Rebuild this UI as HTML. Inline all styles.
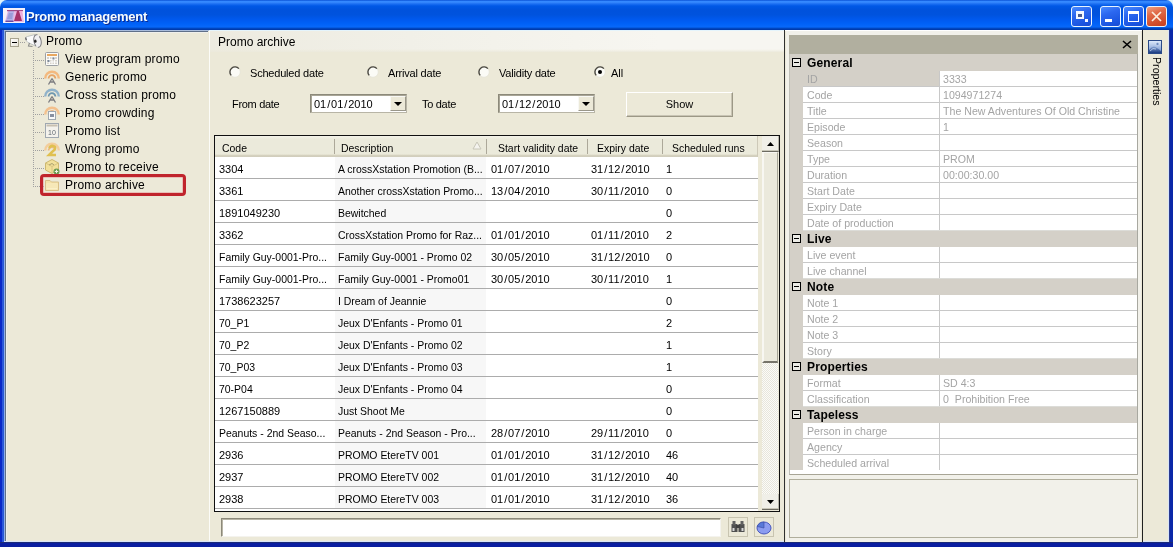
<!DOCTYPE html>
<html><head><meta charset="utf-8">
<style>
*{box-sizing:border-box;margin:0;padding:0}
html,body{width:1173px;height:547px;overflow:hidden;background:#0a3ed8}
body{position:relative;font-family:"Liberation Sans", sans-serif;font-size:11px;color:#000}
#root{position:absolute;left:0;top:0;width:1173px;height:547px;overflow:hidden;will-change:transform;background:#dff4fc}
.ab{position:absolute}
.t{position:absolute;white-space:nowrap;line-height:14px}
.dg{letter-spacing:0px}
.sl{margin:0 0.9px}
.n{transform:scaleX(.95);transform-origin:0 0}
.pn{transform:scaleX(.965);transform-origin:0 0}
</style></head><body><div id="root">

<div class="ab" style="left:0;top:20px;width:1173px;height:527px;background:#0a3ed8"></div>
<div class="ab" style="left:0;top:0;width:1173px;height:30px;border-radius:7px 7px 0 0;background:linear-gradient(to bottom,#0042c8 0px,#2f86ff 1px,#3a8cff 2px,#1a6ef2 4px,#0058e6 6px,#0052dc 10px,#0053de 15px,#005af0 20px,#0062f8 24px,#0868fa 27px,#0050d0 28px,#003cb0 29px,#0038a8 30px)"></div>
<div class="ab" style="left:0;top:30px;width:5px;height:517px;background:linear-gradient(to right,#0a28c8 0 2px,#2a58d8 2px 4px,#90b0e8 4px 5px)"></div>
<div class="ab" style="left:1169px;top:30px;width:4px;height:517px;background:linear-gradient(to right,#2a3a90 0 1px,#0a28a8 1px 4px)"></div>
<div class="ab" style="left:0;top:542px;width:1173px;height:5px;background:linear-gradient(to bottom,#1a2a78 0 1px,#0a1ea0 1px 5px)"></div>
<div class="ab" style="left:5px;top:30px;width:1164px;height:512px;background:#ece9d8"></div>
<div class="ab" style="left:4px;top:30px;width:205px;height:1px;background:#a8bcdc"></div>
<svg class="ab" style="left:3px;top:8px" width="22" height="15" viewBox="0 0 22 15"><rect x="0" y="0" width="22" height="15" fill="#f4f0fa"/><polygon points="2,14 5,2 19,2 21,14" fill="#e8b8e4"/><polygon points="3,13 5.5,3 11,3 10,13" fill="#b4b0e8"/><polygon points="4,11 6,5 10,5 9,11" fill="#9c9ad8"/><rect x="4" y="2" width="16" height="1.2" fill="#a04a88"/><rect x="2.5" y="12.6" width="8" height="1.4" fill="#6a4aa0"/><polygon points="11,13 14,3 16,3 19,13" fill="#a83068"/><polygon points="16,3 19,3 20,9" fill="#f0a8d8"/></svg>
<div class="t" style="left:26px;top:8px;font-size:13px;letter-spacing:-0.25px;font-weight:bold;color:#f4fcff;line-height:17px;text-shadow:1px 1px 0 #0a2a90">Promo management</div>
<div class="ab" style="left:1071px;top:6px;width:21px;height:21px;border:1px solid #e8f4ff;border-radius:3px;background:linear-gradient(160deg,#4a8cff 0%,#2c68f0 35%,#1a54e0 80%,#1a4cd0 100%)"></div>
<div class="ab" style="left:1100px;top:6px;width:21px;height:21px;border:1px solid #e8f4ff;border-radius:3px;background:linear-gradient(160deg,#4a8cff 0%,#2c68f0 35%,#1a54e0 80%,#1a4cd0 100%)"></div>
<div class="ab" style="left:1123px;top:6px;width:21px;height:21px;border:1px solid #e8f4ff;border-radius:3px;background:linear-gradient(160deg,#4a8cff 0%,#2c68f0 35%,#1a54e0 80%,#1a4cd0 100%)"></div>
<div class="ab" style="left:1146px;top:6px;width:21px;height:21px;border:1px solid #e8f4ff;border-radius:3px;background:linear-gradient(160deg,#f0a080 0%,#e06a48 35%,#d04a28 80%,#c84020 100%)"></div>
<div class="ab" style="left:1076px;top:11px;width:8px;height:8px;border:2px solid #f4f8ff;border-top-width:3px;background:#4a5c90"></div>
<div class="ab" style="left:1085px;top:19px;width:3px;height:3px;background:#f4f8ff"></div>
<div class="ab" style="left:1105px;top:19px;width:7px;height:3px;background:#fff"></div>
<div class="ab" style="left:1128px;top:11px;width:11px;height:11px;border:1px solid #fff;border-top:3px solid #fff"></div>
<svg class="ab" style="left:1146px;top:6px" width="21" height="21"><path d="M6 6 L15 15 M15 6 L6 15" stroke="#fbeee0" stroke-width="1.7"/></svg>
<div class="ab" style="left:5px;top:31px;width:203px;height:1px;background:#607088"></div>
<div class="ab" style="left:5px;top:31px;width:1px;height:510px;background:#607088"></div>
<div class="ab" style="left:6px;top:32px;width:202px;height:1px;background:#f0f0ec"></div>
<div class="ab" style="left:6px;top:32px;width:1px;height:509px;background:#eef0f0"></div>
<div class="ab" style="left:4px;top:541px;width:1165px;height:1px;background:#d8e4fa"></div>
<div class="ab" style="left:1168px;top:30px;width:1px;height:512px;background:#d8e4f8"></div>
<div class="ab" style="left:10px;top:38px;width:9px;height:9px;border:1px solid #a8a490;background:linear-gradient(135deg,#fff,#e8e4d8)"></div>
<div class="ab" style="left:12px;top:42px;width:5px;height:1px;background:#000"></div>
<div class="ab" style="left:20px;top:42px;width:5px;height:1px;background:repeating-linear-gradient(to right,#a0a0a0 0 1px,transparent 1px 2px)"></div>
<div class="ab" style="left:33px;top:50px;width:1px;height:137px;background:repeating-linear-gradient(to bottom,#a0a0a0 0 1px,transparent 1px 2px)"></div>
<div class="ab" style="left:35px;top:60px;width:9px;height:1px;background:repeating-linear-gradient(to right,#a0a0a0 0 1px,transparent 1px 2px)"></div>
<div class="ab" style="left:35px;top:78px;width:9px;height:1px;background:repeating-linear-gradient(to right,#a0a0a0 0 1px,transparent 1px 2px)"></div>
<div class="ab" style="left:35px;top:96px;width:9px;height:1px;background:repeating-linear-gradient(to right,#a0a0a0 0 1px,transparent 1px 2px)"></div>
<div class="ab" style="left:35px;top:114px;width:9px;height:1px;background:repeating-linear-gradient(to right,#a0a0a0 0 1px,transparent 1px 2px)"></div>
<div class="ab" style="left:35px;top:132px;width:9px;height:1px;background:repeating-linear-gradient(to right,#a0a0a0 0 1px,transparent 1px 2px)"></div>
<div class="ab" style="left:35px;top:150px;width:9px;height:1px;background:repeating-linear-gradient(to right,#a0a0a0 0 1px,transparent 1px 2px)"></div>
<div class="ab" style="left:35px;top:168px;width:9px;height:1px;background:repeating-linear-gradient(to right,#a0a0a0 0 1px,transparent 1px 2px)"></div>
<div class="ab" style="left:35px;top:186px;width:9px;height:1px;background:repeating-linear-gradient(to right,#a0a0a0 0 1px,transparent 1px 2px)"></div>
<div class="t" style="left:46px;top:33px;font-size:12px;line-height:16px;letter-spacing:0.2px">Promo</div>
<svg class="ab" style="left:23px;top:32px" width="19" height="17" viewBox="0 0 19 17"><path d="M2.5 6 Q3 4.5 4.5 4.5 L12 2.5 L13.5 14.5 L5 10.5 Q3 9.5 2.5 6 Z" fill="#fbfbfb" stroke="#b8bcbc" stroke-width="0.9"/><path d="M3 5.5 Q2.5 7 3.5 8" fill="none" stroke="#505050" stroke-width="1.2"/><path d="M6.5 11 L5.5 14 L9.5 14.5" fill="none" stroke="#8a8a8a" stroke-width="1.1"/><ellipse cx="14.5" cy="9" rx="3.6" ry="6.4" transform="rotate(-12 14.5 9)" fill="#f0f0f2" stroke="#7c7c80" stroke-width="1" stroke-dasharray="9 2 14 2"/><ellipse cx="12.3" cy="9.2" rx="1.3" ry="1.6" fill="#282828"/></svg>
<svg class="ab" style="left:44px;top:50px" width="16" height="17" viewBox="0 0 16 17"><rect x="1.5" y="2.5" width="13" height="13" rx="1" fill="#fbfbf8" stroke="#9ca0a4"/><rect x="3" y="4" width="10" height="2" fill="#e8a860"/><rect x="3" y="7" width="10" height="7" fill="#d8d4cc"/><path d="M3 9.5 H13 M3 12 H13 M5.5 7 V14 M8 7 V14 M10.5 7 V14" stroke="#fff" stroke-width="0.9"/><rect x="8.5" y="7.5" width="2" height="2" fill="#7c8898"/><rect x="3.5" y="10" width="2" height="2" fill="#7c8898"/></svg>
<div class="t" style="left:65px;top:51px;font-size:12px;line-height:16px;letter-spacing:0.2px">View program promo</div>
<svg class="ab" style="left:44px;top:68px" width="16" height="17" viewBox="0 0 16 17"><path d="M1.2 10.5 A6.8 6.8 0 0 1 14.8 10.5" fill="none" stroke="#f4b070" stroke-width="2.4" opacity=".85"/><path d="M4.6 10.5 A3.4 3.4 0 0 1 11.4 10.5" fill="none" stroke="#e89850" stroke-width="1.8" opacity=".85"/><path d="M8 10.5 L4.5 16.5 M8 10.5 L11.5 16.5 M6 14 H10" stroke="#7c7c80" stroke-width="1.3" fill="none"/></svg>
<div class="t" style="left:65px;top:69px;font-size:12px;line-height:16px;letter-spacing:0.2px">Generic promo</div>
<svg class="ab" style="left:44px;top:86px" width="16" height="17" viewBox="0 0 16 17"><path d="M1.2 10.5 A6.8 6.8 0 0 1 14.8 10.5" fill="none" stroke="#80a8c8" stroke-width="2.4" opacity=".85"/><path d="M4.6 10.5 A3.4 3.4 0 0 1 11.4 10.5" fill="none" stroke="#5888a8" stroke-width="1.8" opacity=".85"/><path d="M8 10.5 L4.5 16.5 M8 10.5 L11.5 16.5 M6 14 H10" stroke="#7c7c80" stroke-width="1.3" fill="none"/></svg>
<div class="t" style="left:65px;top:87px;font-size:12px;line-height:16px;letter-spacing:0.2px">Cross station promo</div>
<svg class="ab" style="left:44px;top:104px" width="16" height="17" viewBox="0 0 16 17"><path d="M1.2 10.5 A6.8 6.8 0 0 1 14.8 10.5" fill="none" stroke="#f4b880" stroke-width="2.4" opacity=".85"/><path d="M4.6 10.5 A3.4 3.4 0 0 1 11.4 10.5" fill="none" stroke="#e8a060" stroke-width="1.8" opacity=".85"/><rect x="4.5" y="7.5" width="7" height="8" fill="#fafafa" stroke="#a0a8b0"/><rect x="6" y="10" width="4" height="3" fill="#8890a0"/></svg>
<div class="t" style="left:65px;top:105px;font-size:12px;line-height:16px;letter-spacing:0.2px">Promo crowding</div>
<svg class="ab" style="left:44px;top:122px" width="16" height="17" viewBox="0 0 16 17"><rect x="1.5" y="1.5" width="13" height="14" fill="#f4f2ec" stroke="#a0a8b0"/><rect x="2.5" y="2.5" width="11" height="2" fill="#c8c0b0"/><text x="8" y="13" font-size="7" text-anchor="middle" fill="#606870" font-family="Liberation Sans">10</text></svg>
<div class="t" style="left:65px;top:123px;font-size:12px;line-height:16px;letter-spacing:0.2px">Promo list</div>
<svg class="ab" style="left:44px;top:140px" width="16" height="17" viewBox="0 0 16 17"><path d="M1.2 10.5 A6.8 6.8 0 0 1 14.8 10.5" fill="none" stroke="#f4c890" stroke-width="2.4" opacity=".85"/><path d="M4.6 10.5 A3.4 3.4 0 0 1 11.4 10.5" fill="none" stroke="#eab070" stroke-width="1.8" opacity=".85"/><path d="M5 8 Q8 4 11 7 Q12 9 8 12 L5 15 H12" fill="none" stroke="#e0c050" stroke-width="2.5"/></svg>
<div class="t" style="left:65px;top:141px;font-size:12px;line-height:16px;letter-spacing:0.2px">Wrong promo</div>
<svg class="ab" style="left:44px;top:158px" width="16" height="17" viewBox="0 0 16 17"><path d="M8 1.5 L14.5 5 V12 L8 15.5 L1.5 12 V5 Z" fill="#f2e09a" stroke="#cdb870"/><path d="M1.5 5 L8 8.5 L14.5 5 M8 8.5 V15.5" stroke="#d8c480" fill="none"/><path d="M5 7 L8 5.5 L10 7" stroke="#a8a070" fill="none"/><circle cx="12.5" cy="13.5" r="3" fill="#6a9a50"/><path d="M10.8 13.5 H14.2 M12.5 11.8 V15.2" stroke="#f0f0e0" stroke-width="1"/></svg>
<div class="t" style="left:65px;top:159px;font-size:12px;line-height:16px;letter-spacing:0.2px">Promo to receive</div>
<svg class="ab" style="left:44px;top:176px" width="16" height="17" viewBox="0 0 16 17"><path d="M1.5 4.5 H6 L7.5 6 H14.5 V14.5 H1.5 Z" fill="#f4e2a8" stroke="#d8c088"/><rect x="2.5" y="7.5" width="11" height="6" fill="#faf0c8"/><path d="M3 9 H13 M3 11 H13" stroke="#f0dca0" stroke-width="0.8"/></svg>
<div class="t" style="left:65px;top:177px;font-size:12px;line-height:16px;letter-spacing:0.2px">Promo archive</div>
<div class="ab" style="left:40px;top:174px;width:146px;height:22px;border:3px solid #c0242c;border-radius:4px;box-shadow:inset 0 0 0 1px rgba(230,150,150,.5)"></div>
<div class="ab" style="left:209px;top:30px;width:1px;height:511px;background:#fcfcf8"></div>
<div class="ab" style="left:209px;top:30px;width:575px;height:1px;background:#e4f4fc"></div>
<div class="ab" style="left:784px;top:30px;width:1px;height:512px;background:#303030"></div>
<div class="ab" style="left:210px;top:31px;width:574px;height:21px;background:linear-gradient(to bottom,rgba(236,233,216,0) 0,rgba(236,233,216,0) 18px,rgba(236,233,216,.5) 20px,#ebe9dc 21px),linear-gradient(to right,#edebe0 0,#f1f0e8 200px,#f7f6f1 450px,#f7f6f1 574px)"></div>
<div class="t" style="left:218px;top:35px;font-size:12px">Promo archive</div>
<svg class="ab" style="left:229px;top:66px" width="12" height="12" viewBox="0 0 12 12"><circle cx="6" cy="6" r="5.3" fill="#fbfbf6" stroke="#e4e2d6" stroke-width="0.8"/><path d="M2.2 9.4 A4.9 4.9 0 0 1 9.9 2.6" fill="none" stroke="#4a4840" stroke-width="1.4"/></svg>
<div class="t" style="left:250px;top:66px;letter-spacing:-0.2px">Scheduled date</div>
<svg class="ab" style="left:367px;top:66px" width="12" height="12" viewBox="0 0 12 12"><circle cx="6" cy="6" r="5.3" fill="#fbfbf6" stroke="#e4e2d6" stroke-width="0.8"/><path d="M2.2 9.4 A4.9 4.9 0 0 1 9.9 2.6" fill="none" stroke="#4a4840" stroke-width="1.4"/></svg>
<div class="t" style="left:388px;top:66px;letter-spacing:-0.2px">Arrival date</div>
<svg class="ab" style="left:478px;top:66px" width="12" height="12" viewBox="0 0 12 12"><circle cx="6" cy="6" r="5.3" fill="#fbfbf6" stroke="#e4e2d6" stroke-width="0.8"/><path d="M2.2 9.4 A4.9 4.9 0 0 1 9.9 2.6" fill="none" stroke="#4a4840" stroke-width="1.4"/></svg>
<div class="t" style="left:499px;top:66px;letter-spacing:-0.2px">Validity date</div>
<svg class="ab" style="left:594px;top:66px" width="12" height="12" viewBox="0 0 12 12"><circle cx="6" cy="6" r="5.3" fill="#fbfbf6" stroke="#e4e2d6" stroke-width="0.8"/><path d="M2.2 9.4 A4.9 4.9 0 0 1 9.9 2.6" fill="none" stroke="#4a4840" stroke-width="1.4"/><circle cx="6" cy="6" r="2" fill="#000"/></svg>
<div class="t" style="left:611px;top:66px">All</div>
<div class="t" style="left:232px;top:97px;letter-spacing:-0.3px">From date</div>
<div class="t" style="left:422px;top:97px;letter-spacing:-0.3px">To date</div>
<div class="ab" style="left:310px;top:94px;width:97px;height:19px;background:#fff;border:1px solid;border-color:#8c897a #b8b5a6 #b8b5a6 #8c897a;box-shadow:inset 1px 1px 0 #a8a596"></div><div class="t dg" style="left:314px;top:97px">01<span class=sl>/</span>01<span class=sl>/</span>2010</div><div class="ab" style="left:390px;top:96px;width:16px;height:15px;background:#ece9d8;border:1px solid;border-color:#f8f8f4 #9a978a #9a978a #f8f8f4"></div><div class="ab" style="left:394px;top:102px;width:0;height:0;border-left:4px solid transparent;border-right:4px solid transparent;border-top:4px solid #000"></div>
<div class="ab" style="left:498px;top:94px;width:97px;height:19px;background:#fff;border:1px solid;border-color:#8c897a #b8b5a6 #b8b5a6 #8c897a;box-shadow:inset 1px 1px 0 #a8a596"></div><div class="t dg" style="left:502px;top:97px">01<span class=sl>/</span>12<span class=sl>/</span>2010</div><div class="ab" style="left:578px;top:96px;width:16px;height:15px;background:#ece9d8;border:1px solid;border-color:#f8f8f4 #9a978a #9a978a #f8f8f4"></div><div class="ab" style="left:582px;top:102px;width:0;height:0;border-left:4px solid transparent;border-right:4px solid transparent;border-top:4px solid #000"></div>
<div class="ab" style="left:626px;top:92px;width:107px;height:25px;background:#ece9d8;border:1px solid;border-color:#fff #9c9886 #9c9886 #fff;box-shadow:inset -1px -1px 0 #c8c4b4"></div>
<div class="t" style="left:626px;top:97px;width:107px;text-align:center">Show</div>
<div class="ab" style="left:214px;top:135px;width:566px;height:377px;background:#fff;border:1px solid #101010"></div>
<div class="ab" style="left:335px;top:157px;width:151px;height:352px;background:#f7f7f7"></div>
<div class="ab" style="left:215px;top:136px;width:543px;height:21px;background:linear-gradient(to bottom,#f4f3ea,#ebeadb 3px,#ebeadb 18px,#dedbc8 19px,#cbc7b5 20px,#d8d5c4 21px)"></div>
<div class="ab" style="left:757px;top:136px;width:1px;height:21px;background:#cdc9b8"></div>
<div class="t n" style="left:222px;top:141px">Code</div>
<div class="ab" style="left:334px;top:139px;width:1px;height:15px;background:#aca899"></div>
<div class="t n" style="left:341px;top:141px">Description</div>
<div class="ab" style="left:486px;top:139px;width:1px;height:15px;background:#aca899"></div>
<div class="t n" style="left:498px;top:141px">Start validity date</div>
<div class="ab" style="left:587px;top:139px;width:1px;height:15px;background:#aca899"></div>
<div class="t n" style="left:597px;top:141px">Expiry date</div>
<div class="ab" style="left:662px;top:139px;width:1px;height:15px;background:#aca899"></div>
<div class="t n" style="left:672px;top:141px">Scheduled runs</div>
<svg class="ab" style="left:472px;top:141px" width="10" height="9"><path d="M1 8 L5 1 L9 8 Z" fill="#f4f3ee" stroke="#c8c6b8" stroke-width="1"/></svg>
<div class="ab" style="left:215px;top:178px;width:543px;height:1px;background:#acacac"></div>
<div class="t" style="left:219px;top:162px">3304</div>
<div class="t n" style="left:338px;top:162px">A crossXstation Promotion (B...</div>
<div class="t" style="left:491px;top:162px">01<span class="sl">/</span>07<span class="sl">/</span>2010</div>
<div class="t" style="left:591px;top:162px">31<span class="sl">/</span>12<span class="sl">/</span>2010</div>
<div class="t" style="left:666px;top:162px">1</div>
<div class="ab" style="left:215px;top:200px;width:543px;height:1px;background:#acacac"></div>
<div class="t" style="left:219px;top:184px">3361</div>
<div class="t n" style="left:338px;top:184px">Another crossXstation Promo...</div>
<div class="t" style="left:491px;top:184px">13<span class="sl">/</span>04<span class="sl">/</span>2010</div>
<div class="t" style="left:591px;top:184px">30<span class="sl">/</span>11<span class="sl">/</span>2010</div>
<div class="t" style="left:666px;top:184px">0</div>
<div class="ab" style="left:215px;top:222px;width:543px;height:1px;background:#acacac"></div>
<div class="t" style="left:219px;top:206px">1891049230</div>
<div class="t n" style="left:338px;top:206px">Bewitched</div>
<div class="t" style="left:666px;top:206px">0</div>
<div class="ab" style="left:215px;top:244px;width:543px;height:1px;background:#acacac"></div>
<div class="t" style="left:219px;top:228px">3362</div>
<div class="t n" style="left:338px;top:228px">CrossXstation Promo for Raz...</div>
<div class="t" style="left:491px;top:228px">01<span class="sl">/</span>01<span class="sl">/</span>2010</div>
<div class="t" style="left:591px;top:228px">01<span class="sl">/</span>11<span class="sl">/</span>2010</div>
<div class="t" style="left:666px;top:228px">2</div>
<div class="ab" style="left:215px;top:266px;width:543px;height:1px;background:#acacac"></div>
<div class="t n" style="left:219px;top:250px">Family Guy-0001-Pro...</div>
<div class="t n" style="left:338px;top:250px">Family Guy-0001 - Promo 02</div>
<div class="t" style="left:491px;top:250px">30<span class="sl">/</span>05<span class="sl">/</span>2010</div>
<div class="t" style="left:591px;top:250px">31<span class="sl">/</span>12<span class="sl">/</span>2010</div>
<div class="t" style="left:666px;top:250px">0</div>
<div class="ab" style="left:215px;top:288px;width:543px;height:1px;background:#acacac"></div>
<div class="t n" style="left:219px;top:272px">Family Guy-0001-Pro...</div>
<div class="t n" style="left:338px;top:272px">Family Guy-0001 - Promo01</div>
<div class="t" style="left:491px;top:272px">30<span class="sl">/</span>05<span class="sl">/</span>2010</div>
<div class="t" style="left:591px;top:272px">30<span class="sl">/</span>11<span class="sl">/</span>2010</div>
<div class="t" style="left:666px;top:272px">1</div>
<div class="ab" style="left:215px;top:310px;width:543px;height:1px;background:#acacac"></div>
<div class="t" style="left:219px;top:294px">1738623257</div>
<div class="t n" style="left:338px;top:294px">I Dream of Jeannie</div>
<div class="t" style="left:666px;top:294px">0</div>
<div class="ab" style="left:215px;top:332px;width:543px;height:1px;background:#acacac"></div>
<div class="t n" style="left:219px;top:316px">70_P1</div>
<div class="t n" style="left:338px;top:316px">Jeux D'Enfants - Promo 01</div>
<div class="t" style="left:666px;top:316px">2</div>
<div class="ab" style="left:215px;top:354px;width:543px;height:1px;background:#acacac"></div>
<div class="t n" style="left:219px;top:338px">70_P2</div>
<div class="t n" style="left:338px;top:338px">Jeux D'Enfants - Promo 02</div>
<div class="t" style="left:666px;top:338px">1</div>
<div class="ab" style="left:215px;top:376px;width:543px;height:1px;background:#acacac"></div>
<div class="t n" style="left:219px;top:360px">70_P03</div>
<div class="t n" style="left:338px;top:360px">Jeux D'Enfants - Promo 03</div>
<div class="t" style="left:666px;top:360px">1</div>
<div class="ab" style="left:215px;top:398px;width:543px;height:1px;background:#acacac"></div>
<div class="t n" style="left:219px;top:382px">70-P04</div>
<div class="t n" style="left:338px;top:382px">Jeux D'Enfants - Promo 04</div>
<div class="t" style="left:666px;top:382px">0</div>
<div class="ab" style="left:215px;top:420px;width:543px;height:1px;background:#acacac"></div>
<div class="t" style="left:219px;top:404px">1267150889</div>
<div class="t n" style="left:338px;top:404px">Just Shoot Me</div>
<div class="t" style="left:666px;top:404px">0</div>
<div class="ab" style="left:215px;top:442px;width:543px;height:1px;background:#acacac"></div>
<div class="t n" style="left:219px;top:426px">Peanuts - 2nd Seaso...</div>
<div class="t n" style="left:338px;top:426px">Peanuts - 2nd Season - Pro...</div>
<div class="t" style="left:491px;top:426px">28<span class="sl">/</span>07<span class="sl">/</span>2010</div>
<div class="t" style="left:591px;top:426px">29<span class="sl">/</span>11<span class="sl">/</span>2010</div>
<div class="t" style="left:666px;top:426px">0</div>
<div class="ab" style="left:215px;top:464px;width:543px;height:1px;background:#acacac"></div>
<div class="t" style="left:219px;top:448px">2936</div>
<div class="t n" style="left:338px;top:448px">PROMO EtereTV 001</div>
<div class="t" style="left:491px;top:448px">01<span class="sl">/</span>01<span class="sl">/</span>2010</div>
<div class="t" style="left:591px;top:448px">31<span class="sl">/</span>12<span class="sl">/</span>2010</div>
<div class="t" style="left:666px;top:448px">46</div>
<div class="ab" style="left:215px;top:486px;width:543px;height:1px;background:#acacac"></div>
<div class="t" style="left:219px;top:470px">2937</div>
<div class="t n" style="left:338px;top:470px">PROMO EtereTV 002</div>
<div class="t" style="left:491px;top:470px">01<span class="sl">/</span>01<span class="sl">/</span>2010</div>
<div class="t" style="left:591px;top:470px">31<span class="sl">/</span>12<span class="sl">/</span>2010</div>
<div class="t" style="left:666px;top:470px">40</div>
<div class="ab" style="left:215px;top:508px;width:543px;height:1px;background:#acacac"></div>
<div class="t" style="left:219px;top:492px">2938</div>
<div class="t n" style="left:338px;top:492px">PROMO EtereTV 003</div>
<div class="t" style="left:491px;top:492px">01<span class="sl">/</span>01<span class="sl">/</span>2010</div>
<div class="t" style="left:591px;top:492px">31<span class="sl">/</span>12<span class="sl">/</span>2010</div>
<div class="t" style="left:666px;top:492px">36</div>
<div class="ab" style="left:758px;top:136px;width:21px;height:375px;background:#ece9d8"></div>
<div class="ab" style="left:762px;top:152px;width:16px;height:211px;background:#ebe9dc;border-left:2px solid #f8f7f2;border-top:1px solid #f8f7f2;border-bottom:2px solid #76746a;border-right:1px solid #a8a698"></div>
<div class="ab" style="left:762px;top:363px;width:16px;height:131px;background:repeating-conic-gradient(#e8e6dc 0 25%,#fbfbf8 0 50%) 0 0/2px 2px"></div>
<div class="ab" style="left:762px;top:136px;width:17px;height:16px;background:#f0efe8;border-bottom:1px solid #6c6a60;border-right:1px solid #b8b6aa;box-shadow:inset 0 -1px 0 #c8c6b8"></div><svg class="ab" style="left:767px;top:142px" width="7" height="4"><path d="M0 4 L3.5 0 L7 4 Z" fill="#000"/></svg>
<div class="ab" style="left:762px;top:494px;width:17px;height:16px;background:#f0efe8;border-bottom:1px solid #6c6a60;border-right:1px solid #b8b6aa;box-shadow:inset 0 -1px 0 #c8c6b8"></div><svg class="ab" style="left:767px;top:500px" width="7" height="4"><path d="M0 0 L7 0 L3.5 4 Z" fill="#000"/></svg>
<div class="ab" style="left:221px;top:518px;width:500px;height:19px;background:#fff;border:1px solid;border-color:#8c897a #f4f3ee #f4f3ee #8c897a;box-shadow:inset 1px 1px 0 #b8b5a6"></div>
<div class="ab" style="left:728px;top:517px;width:20px;height:20px;border:1px solid #c8c4b0;background:#ece9d8"></div>
<svg class="ab" style="left:731px;top:520px" width="14" height="13"><rect x="0.5" y="4" width="6" height="8" fill="#505050"/><rect x="7.5" y="4" width="6" height="8" fill="#505050"/><rect x="1.5" y="1" width="3" height="4" fill="#606060"/><rect x="9.5" y="1" width="3" height="4" fill="#606060"/><rect x="5" y="5" width="4" height="3" fill="#404040"/><rect x="1.5" y="8" width="2" height="3" fill="#d8d8d8"/><rect x="10.5" y="8" width="2" height="3" fill="#d8d8d8"/></svg>
<div class="ab" style="left:754px;top:517px;width:20px;height:20px;border:1px solid #c8c4b0;background:#ece9d8"></div>
<svg class="ab" style="left:756px;top:520px" width="16" height="15"><ellipse cx="8" cy="8" rx="7" ry="6" fill="#8c9cf0" stroke="#4858c0"/><path d="M8 8 L8 2 A7 6 0 0 0 1.2 6.5 Z" fill="#5878d8" stroke="#3848a0" stroke-width="0.6"/></svg>
<div class="ab" style="left:785px;top:30px;width:357px;height:512px;background:#ece9d8"></div>
<div class="ab" style="left:785px;top:30px;width:357px;height:1px;background:#fff"></div>
<div class="ab" style="left:1142px;top:30px;width:1px;height:512px;background:#202020"></div>
<div class="ab" style="left:786px;top:31px;width:355px;height:511px;background:#f2f1ea"></div>
<div class="ab" style="left:789px;top:35px;width:349px;height:19px;background:#b1af9f"></div>
<svg class="ab" style="left:1122px;top:40px" width="10" height="9"><path d="M1 1 L9 8 M9 1 L1 8" stroke="#000" stroke-width="1.6"/></svg>
<div class="ab" style="left:789px;top:54px;width:349px;height:421px;background:#fff;border-bottom:1px solid #a8a596;border-left:1px solid #c0c0b8;border-right:1px solid #a8a8a0"></div>
<div class="ab" style="left:790px;top:54px;width:13px;height:416px;background:#d4d0c8"></div>
<div class="ab" style="left:803px;top:70px;width:136px;height:16px;background:#d4d0c8"></div>
<div class="ab" style="left:803px;top:70px;width:334px;height:1px;background:#c8c8c8"></div>
<div class="ab" style="left:939px;top:70px;width:1px;height:16px;background:#c8c8c8"></div>
<div class="t pn" style="left:807px;top:72px;color:#a4a4a4">ID</div>
<div class="t pn" style="left:943px;top:72px;color:#a4a4a4">3333</div>
<div class="ab" style="left:803px;top:86px;width:334px;height:1px;background:#c8c8c8"></div>
<div class="ab" style="left:939px;top:86px;width:1px;height:16px;background:#c8c8c8"></div>
<div class="t pn" style="left:807px;top:88px;color:#a4a4a4">Code</div>
<div class="t pn" style="left:943px;top:88px;color:#a4a4a4">1094971274</div>
<div class="ab" style="left:803px;top:102px;width:334px;height:1px;background:#c8c8c8"></div>
<div class="ab" style="left:939px;top:102px;width:1px;height:16px;background:#c8c8c8"></div>
<div class="t pn" style="left:807px;top:104px;color:#a4a4a4">Title</div>
<div class="t pn" style="left:943px;top:104px;color:#a4a4a4">The New Adventures Of Old Christine</div>
<div class="ab" style="left:803px;top:118px;width:334px;height:1px;background:#c8c8c8"></div>
<div class="ab" style="left:939px;top:118px;width:1px;height:16px;background:#c8c8c8"></div>
<div class="t pn" style="left:807px;top:120px;color:#a4a4a4">Episode</div>
<div class="t pn" style="left:943px;top:120px;color:#a4a4a4">1</div>
<div class="ab" style="left:803px;top:134px;width:334px;height:1px;background:#c8c8c8"></div>
<div class="ab" style="left:939px;top:134px;width:1px;height:16px;background:#c8c8c8"></div>
<div class="t pn" style="left:807px;top:136px;color:#a4a4a4">Season</div>
<div class="ab" style="left:803px;top:150px;width:334px;height:1px;background:#c8c8c8"></div>
<div class="ab" style="left:939px;top:150px;width:1px;height:16px;background:#c8c8c8"></div>
<div class="t pn" style="left:807px;top:152px;color:#a4a4a4">Type</div>
<div class="t pn" style="left:943px;top:152px;color:#a4a4a4">PROM</div>
<div class="ab" style="left:803px;top:166px;width:334px;height:1px;background:#c8c8c8"></div>
<div class="ab" style="left:939px;top:166px;width:1px;height:16px;background:#c8c8c8"></div>
<div class="t pn" style="left:807px;top:168px;color:#a4a4a4">Duration</div>
<div class="t pn" style="left:943px;top:168px;color:#a4a4a4">00:00:30.00</div>
<div class="ab" style="left:803px;top:182px;width:334px;height:1px;background:#c8c8c8"></div>
<div class="ab" style="left:939px;top:182px;width:1px;height:16px;background:#c8c8c8"></div>
<div class="t pn" style="left:807px;top:184px;color:#a4a4a4">Start Date</div>
<div class="ab" style="left:803px;top:198px;width:334px;height:1px;background:#c8c8c8"></div>
<div class="ab" style="left:939px;top:198px;width:1px;height:16px;background:#c8c8c8"></div>
<div class="t pn" style="left:807px;top:200px;color:#a4a4a4">Expiry Date</div>
<div class="ab" style="left:803px;top:214px;width:334px;height:1px;background:#c8c8c8"></div>
<div class="ab" style="left:939px;top:214px;width:1px;height:16px;background:#c8c8c8"></div>
<div class="t pn" style="left:807px;top:216px;color:#a4a4a4">Date of production</div>
<div class="ab" style="left:803px;top:230px;width:334px;height:1px;background:#dcdcd8"></div>
<div class="ab" style="left:803px;top:246px;width:334px;height:1px;background:#c8c8c8"></div>
<div class="ab" style="left:939px;top:246px;width:1px;height:16px;background:#c8c8c8"></div>
<div class="t pn" style="left:807px;top:248px;color:#a4a4a4">Live event</div>
<div class="ab" style="left:803px;top:262px;width:334px;height:1px;background:#c8c8c8"></div>
<div class="ab" style="left:939px;top:262px;width:1px;height:16px;background:#c8c8c8"></div>
<div class="t pn" style="left:807px;top:264px;color:#a4a4a4">Live channel</div>
<div class="ab" style="left:803px;top:278px;width:334px;height:1px;background:#dcdcd8"></div>
<div class="ab" style="left:803px;top:294px;width:334px;height:1px;background:#c8c8c8"></div>
<div class="ab" style="left:939px;top:294px;width:1px;height:16px;background:#c8c8c8"></div>
<div class="t pn" style="left:807px;top:296px;color:#a4a4a4">Note 1</div>
<div class="ab" style="left:803px;top:310px;width:334px;height:1px;background:#c8c8c8"></div>
<div class="ab" style="left:939px;top:310px;width:1px;height:16px;background:#c8c8c8"></div>
<div class="t pn" style="left:807px;top:312px;color:#a4a4a4">Note 2</div>
<div class="ab" style="left:803px;top:326px;width:334px;height:1px;background:#c8c8c8"></div>
<div class="ab" style="left:939px;top:326px;width:1px;height:16px;background:#c8c8c8"></div>
<div class="t pn" style="left:807px;top:328px;color:#a4a4a4">Note 3</div>
<div class="ab" style="left:803px;top:342px;width:334px;height:1px;background:#c8c8c8"></div>
<div class="ab" style="left:939px;top:342px;width:1px;height:16px;background:#c8c8c8"></div>
<div class="t pn" style="left:807px;top:344px;color:#a4a4a4">Story</div>
<div class="ab" style="left:803px;top:358px;width:334px;height:1px;background:#dcdcd8"></div>
<div class="ab" style="left:803px;top:374px;width:334px;height:1px;background:#c8c8c8"></div>
<div class="ab" style="left:939px;top:374px;width:1px;height:16px;background:#c8c8c8"></div>
<div class="t pn" style="left:807px;top:376px;color:#a4a4a4">Format</div>
<div class="t pn" style="left:943px;top:376px;color:#a4a4a4">SD 4:3</div>
<div class="ab" style="left:803px;top:390px;width:334px;height:1px;background:#c8c8c8"></div>
<div class="ab" style="left:939px;top:390px;width:1px;height:16px;background:#c8c8c8"></div>
<div class="t pn" style="left:807px;top:392px;color:#a4a4a4">Classification</div>
<div class="t pn" style="left:943px;top:392px;color:#a4a4a4">0&nbsp; Prohibition Free</div>
<div class="ab" style="left:803px;top:406px;width:334px;height:1px;background:#dcdcd8"></div>
<div class="ab" style="left:803px;top:422px;width:334px;height:1px;background:#c8c8c8"></div>
<div class="ab" style="left:939px;top:422px;width:1px;height:16px;background:#c8c8c8"></div>
<div class="t pn" style="left:807px;top:424px;color:#a4a4a4">Person in charge</div>
<div class="ab" style="left:803px;top:438px;width:334px;height:1px;background:#c8c8c8"></div>
<div class="ab" style="left:939px;top:438px;width:1px;height:16px;background:#c8c8c8"></div>
<div class="t pn" style="left:807px;top:440px;color:#a4a4a4">Agency</div>
<div class="ab" style="left:803px;top:454px;width:334px;height:1px;background:#c8c8c8"></div>
<div class="ab" style="left:939px;top:454px;width:1px;height:16px;background:#c8c8c8"></div>
<div class="t pn" style="left:807px;top:456px;color:#a4a4a4">Scheduled arrival</div>
<div class="ab" style="left:790px;top:54px;width:347px;height:17px;background:#d4d0c8"></div>
<div class="ab" style="left:792px;top:58px;width:9px;height:9px;border:1px solid #000;background:#ecebe6"></div>
<div class="ab" style="left:794px;top:62px;width:5px;height:1px;background:#000"></div>
<div class="t" style="left:807px;top:56px;font-weight:bold;font-size:12px;letter-spacing:0.15px">General</div>
<div class="ab" style="left:790px;top:231px;width:347px;height:16px;background:#d4d0c8"></div>
<div class="ab" style="left:792px;top:234px;width:9px;height:9px;border:1px solid #000;background:#ecebe6"></div>
<div class="ab" style="left:794px;top:238px;width:5px;height:1px;background:#000"></div>
<div class="t" style="left:807px;top:232px;font-weight:bold;font-size:12px;letter-spacing:0.15px">Live</div>
<div class="ab" style="left:790px;top:279px;width:347px;height:16px;background:#d4d0c8"></div>
<div class="ab" style="left:792px;top:282px;width:9px;height:9px;border:1px solid #000;background:#ecebe6"></div>
<div class="ab" style="left:794px;top:286px;width:5px;height:1px;background:#000"></div>
<div class="t" style="left:807px;top:280px;font-weight:bold;font-size:12px;letter-spacing:0.15px">Note</div>
<div class="ab" style="left:790px;top:359px;width:347px;height:16px;background:#d4d0c8"></div>
<div class="ab" style="left:792px;top:362px;width:9px;height:9px;border:1px solid #000;background:#ecebe6"></div>
<div class="ab" style="left:794px;top:366px;width:5px;height:1px;background:#000"></div>
<div class="t" style="left:807px;top:360px;font-weight:bold;font-size:12px;letter-spacing:0.15px">Properties</div>
<div class="ab" style="left:790px;top:407px;width:347px;height:16px;background:#d4d0c8"></div>
<div class="ab" style="left:792px;top:410px;width:9px;height:9px;border:1px solid #000;background:#ecebe6"></div>
<div class="ab" style="left:794px;top:414px;width:5px;height:1px;background:#000"></div>
<div class="t" style="left:807px;top:408px;font-weight:bold;font-size:12px;letter-spacing:0.15px">Tapeless</div>
<div class="ab" style="left:789px;top:479px;width:349px;height:59px;border:1px solid #b0ae9c"></div>
<div class="ab" style="left:1143px;top:30px;width:25px;height:511px;background:#ece9d8"></div>
<svg class="ab" style="left:1148px;top:40px" width="14" height="14"><defs><linearGradient id="pg" x1="0" y1="0" x2="0" y2="1"><stop offset="0" stop-color="#e0ecfc"/><stop offset="1" stop-color="#6a8cc8"/></linearGradient><linearGradient id="pm" x1="0" y1="0" x2="0" y2="1"><stop offset="0" stop-color="#8aa8d8"/><stop offset="1" stop-color="#1a3a80"/></linearGradient></defs><rect x="0.5" y="0.5" width="13" height="13" fill="url(#pg)" stroke="#2a4a88"/><path d="M1 13 L1 10 Q5 4 9 8 Q11 9 13 11 L13 13 Z" fill="url(#pm)"/><path d="M2 11 Q5 7 8 9" stroke="#c8d8f0" stroke-width="0.8" fill="none"/><circle cx="9.5" cy="4" r="1.6" fill="#6a8ac0" stroke="#dde8f8" stroke-width="0.6"/></svg>
<div class="t" style="left:1148px;top:57px;transform-origin:0 0;transform:translate(16px,0) rotate(90deg) scaleX(.97)">Properties</div>
</div></body></html>
